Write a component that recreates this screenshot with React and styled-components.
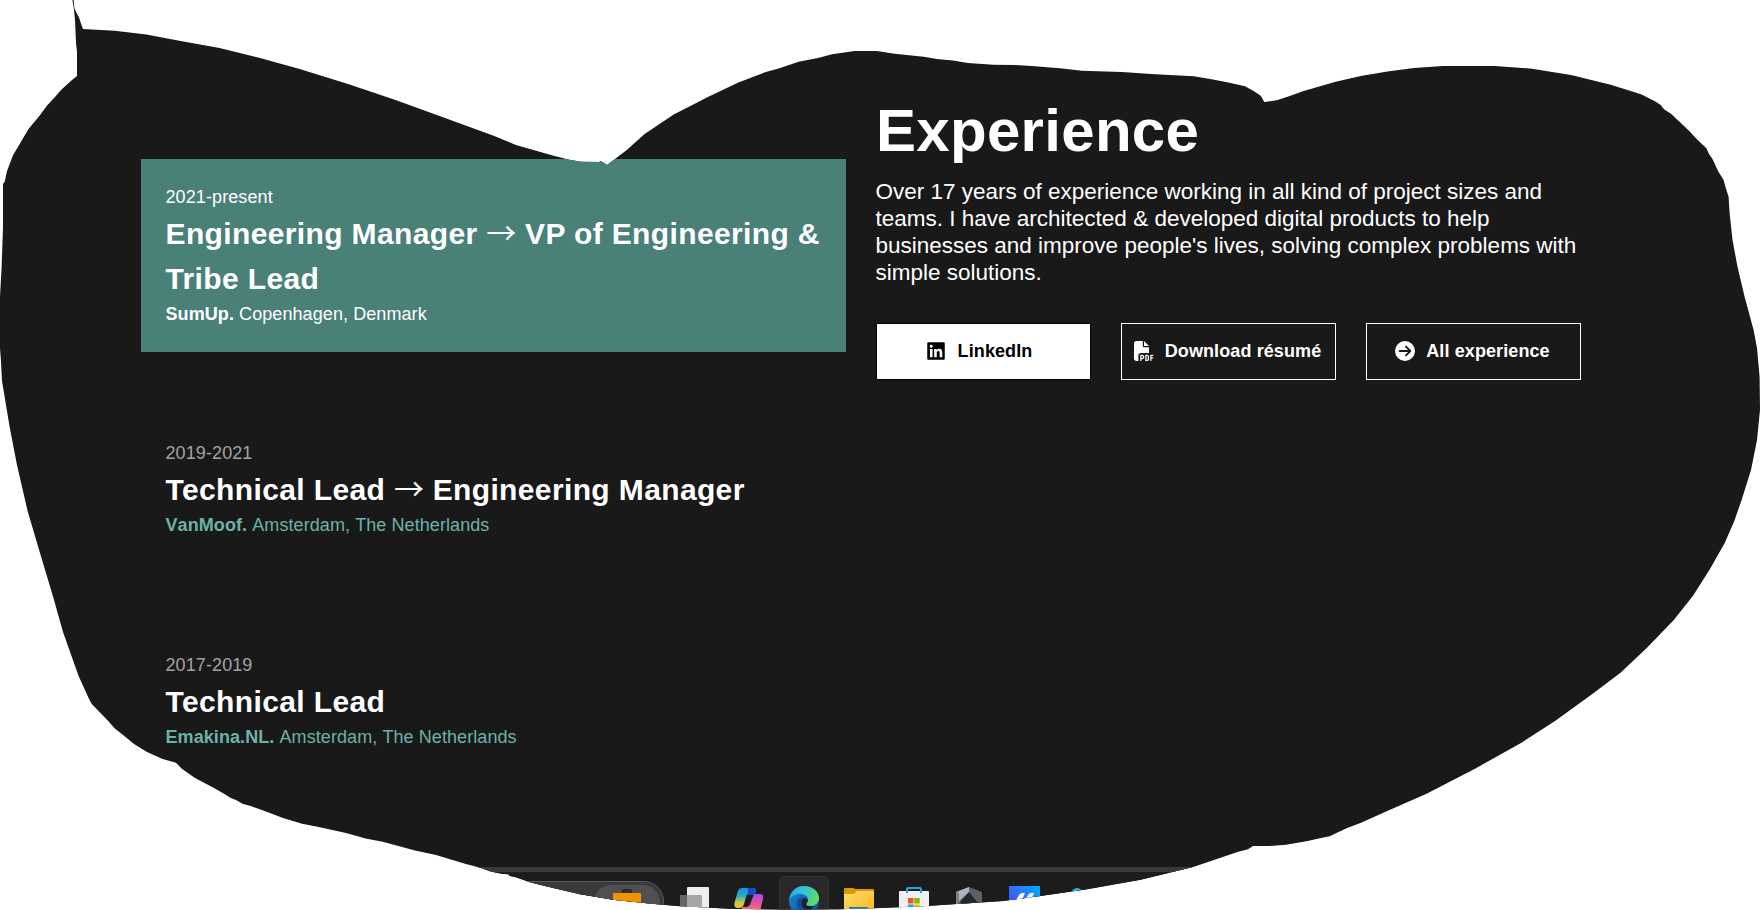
import React from "react";
import styled, { createGlobalStyle } from "styled-components";
import { FaLinkedin, FaFilePdf, FaCircleArrowRight } from "react-icons/fa6";

const GlobalStyle = createGlobalStyle`
  * { box-sizing: border-box; }
  body {
    margin: 0;
    background: #fff;
    font-family: "Liberation Sans", Arial, sans-serif;
    overflow: hidden;
  }
`;

const OUTLINE = `
72.4,0 73.6,0 74.4,8 76.3,12.5 79,17.5 81,23.5 83,29 114.7,30.8 146.3,34.5 182,41.3 219.5,48 261,58.3
300.5,69.3 348,84 395.5,100 443,117.3 494.3,136 516,145 553.6,155.7 569.4,159.8 581,161.7 599,162 601,161
604,163 607,165 626.8,150 644.6,134 673.7,114.5 709.4,96.3 738.4,82.5 765,72.3 778.6,68.6 798.7,61.8
819,57.7 832,54.3 854.5,51 876.8,51 894.6,53.7 923.7,56.7 937,59 952.7,60.5 968,63 993,64.7 1015,65
1035,66.3 1060,68.3 1082,70.7 1122,72 1151,74 1193.7,76.3 1211.6,79.3 1229.5,82.7 1245,86.3 1254,91.3
1260.7,95.7 1264.3,102 1276.8,100.3 1289,96.3 1303.6,91 1335.7,81.7 1360.7,76 1389,71.3 1414,68 1443,66
1494.6,66 1532,68.7 1571,75 1610.7,84.7 1641,94.3 1655,101.3 1660.7,105 1664,109.3 1671,113.7 1689,130.7
1696.4,138.7 1706.4,148.3 1709,154 1712.5,159 1718,171 1723.6,180 1726,188.7 1728.6,196.7 1729.6,213
1732.5,240 1737.5,266.7 1744.6,296.7 1753.6,330 1757,348 1759.6,376.7 1760,410 1757,440 1751,470
1741.6,500 1734,521.7 1724.7,543 1710,569 1693,595.7 1673.8,620 1647,647.7 1620.5,672.7 1591,695
1555,721 1521,743 1475,768.7 1426.6,793.7 1387.8,810.7 1361,822.7 1346.6,828.3 1329.6,836.3 1317.5,838.7
1307.8,841 1286,844.7 1269,846 1253,846 1248,849.3 1237.5,852 1194,866.7 1140.6,879.7 1087,889.3
1038.8,896.3 1003,901 953,904.3 926.7,906 880,908 840,909.3 780,909.6 730,908.7 676.7,906 646.7,903.3
613,899.7 580,894.3 548,886.7 530,882.3 516,877.3 510,876 508,874.3 501.7,873.7 491.7,871.7 480.3,867.7
465,863.8 436,855 415,850.5 382.7,841.7 365.5,838.6 346,833 317.6,826.7 302,823.8 283,818 264,810.8
250.7,806 243,804 236,800 230.8,798 224,793.7 214,788 195,778 181.8,768.8 176,762.8 162.6,759 147,752
134,744 122.5,734.4 114.8,728.4 108,720.7 97.6,710 91.8,704 88.8,698.6 78.5,675.8 63,632 53.6,598.6
40,553 27.6,511 17,465 9.6,426.7 2,381 0.9,360 0,348 0,297 1.6,267 3,227 3,184 4.7,181.7 7,171 13,155.3
28.5,129 39.5,115.7 47.5,105 55,97 61,90 72,80 77,76 77,52 76,43 75,20 74,9.5`
  .trim()
  .split(/\s+/)
  .map((p) => p.split(",").map((n) => n + "px").join(" "))
  .join(", ");

const Page = styled.div`
  width: 1760px;
  height: 910px;
  display: flex;
  flex-direction: column;
  background: #191919;
  color: #fff;
  clip-path: polygon(${OUTLINE});
`;

const Main = styled.main`
  height: 867px;
  display: grid;
  grid-template-columns: 705px 705px;
  column-gap: 30px;
  padding-left: 141px;
  align-items: start;
`;

const Timeline = styled.section`
  display: flex;
  flex-direction: column;
  gap: 63.25px;
  padding-top: 159px;
`;

const Job = styled.article`
  padding: 25px 0 24px 24.5px;
  background: ${(p) => (p.$active ? "#498078" : "transparent")};
  color: ${(p) => (p.$active ? "#fff" : "#6cb2a9")};
`;

const Period = styled.p`
  margin: 0;
  font-size: 18px;
  line-height: 27px;
  letter-spacing: 0.1px;
  color: ${(p) => (p.$active ? "#fff" : "#a3a3a3")};
`;

const Role = styled.h3`
  margin: 0;
  font-size: 30px;
  line-height: 45px;
  font-weight: 700;
  letter-spacing: 0.37px;
  color: #fff;
  white-space: pre-line;
`;

const Arrow = styled.span`
  font-family: "Noto Sans CJK SC", sans-serif;
  font-weight: 400;
  letter-spacing: 0;
  line-height: 1;
`;

const Place = styled.p`
  margin: 0;
  font-size: 18px;
  line-height: 27px;
  letter-spacing: 0.08px;
  font-kerning: none;
`;

const Intro = styled.section`
  padding-top: 96px;
`;

const Title = styled.h1`
  margin: 0;
  font-size: 60px;
  line-height: 69px;
  font-weight: 700;
  letter-spacing: 0.3px;
`;

const Summary = styled.p`
  margin: 13px 0 37px -0.5px;
  font-size: 22.5px;
  line-height: 27px;
  white-space: pre;
`;

const Actions = styled.div`
  display: grid;
  grid-template-columns: repeat(3, 215px);
  gap: 30px;
`;

const Button = styled.a`
  height: 57px;
  display: flex;
  align-items: center;
  justify-content: center;
  gap: ${(p) => (p.$primary ? 12 : 11)}px;
  padding-right: ${(p) => (p.$primary ? 9 : 2)}px;
  border: 1px solid ${(p) => (p.$primary ? "#000" : "#fff")};
  background: ${(p) => (p.$primary ? "#fff" : "transparent")};
  color: ${(p) => (p.$primary ? "#000" : "#fff")};
  font-size: 18px;
  font-weight: 700;
  letter-spacing: 0.1px;
  white-space: nowrap;
  svg { width: 20px; height: 20px; flex: none; margin-bottom: 2px; }
`;

const Taskbar = styled.footer`
  height: 43px;
  display: flex;
  align-items: flex-start;
  gap: 5px;
  padding: 4px 0 0 400px;
  background: #1c1c1c;
  border-top: 5px solid #3a3a3a;
`;

const Search = styled.div`
  width: 264px;
  height: 40px;
  margin-top: 5px;
  display: flex;
  justify-content: flex-end;
  padding: 3px 3px 0 0;
  border: 1px solid #5a5a5a;
  border-radius: 20px;
  background: #3a3a3a;
`;

const SearchBadge = styled.div`
  width: 66px;
  height: 34px;
  display: flex;
  justify-content: center;
  padding-top: 4px;
  border-radius: 17px;
  background: #505050;
`;

const Slot = styled.div`
  width: 50px;
  height: 46px;
  display: flex;
  justify-content: center;
  padding-top: 9px;
  border-radius: 5px;
  border: 1px solid ${(p) => (p.$active ? "#343434" : "transparent")};
  background: ${(p) => (p.$active ? "#292929" : "transparent")};
  svg { flex: none; overflow: visible; }
`;

const Briefcase = () => (
  <svg width="28" height="26" viewBox="0 0 28 26">
    <path d="M10 4V2q0-1 1-1h6q1 0 1 1v2" fill="#333" stroke="#282828" strokeWidth="2" />
    <rect y="4" width="28" height="20" rx="1" fill="#f39200" />
  </svg>
);

const TaskView = () => (
  <svg width="30" height="32" viewBox="0 0 30 32">
    <rect x="8" y="1" width="22" height="24" rx="1" fill="#eee" />
    <rect x="1" y="9" width="22" height="22" rx="1" fill="#999" opacity=".85" />
    <rect x="1" y="9" width="7" height="22" fill="#666" />
  </svg>
);

const Copilot = () => (
  <svg width="30" height="30" viewBox="0 0 30 30">
    <defs>
      <linearGradient id="cpA" x1="0" y1="0" x2="0" y2="1">
        <stop offset="0" stopColor="#168be2" />
        <stop offset=".4" stopColor="#25b1c6" />
        <stop offset=".75" stopColor="#dac83a" />
      </linearGradient>
      <linearGradient id="cpB" x1="0" y1="0" x2="0" y2="1">
        <stop offset="0" stopColor="#a44be8" />
        <stop offset=".5" stopColor="#ef5492" />
        <stop offset="1" stopColor="#ff8c4a" />
      </linearGradient>
    </defs>
    <path d="M7 2h12q3 0 3 5h-6q-3 0-4 4l-2 7q-1 4-5 4H3q-4-1-2-7L4 5q1-3 3-3z" fill="url(#cpA)" />
    <path d="M14 2h4q3 0 4 5l-1 2h-7z" fill="#164bc4" />
    <path d="M20 8h6q4 0 3 5l-3 12q-1 4-5 4H9q-2-1-1-8h5q3-1 4-5z" fill="url(#cpB)" />
  </svg>
);

const Edge = () => (
  <svg width="30" height="30" viewBox="0 0 30 30">
    <defs>
      <linearGradient id="edA" x1="0" y1=".3" x2="1" y2=".5">
        <stop offset="0" stopColor="#26aee8" />
        <stop offset=".5" stopColor="#33c3d2" />
        <stop offset="1" stopColor="#65df59" />
      </linearGradient>
      <linearGradient id="edB" x1="0" y1="0" x2="1" y2="1">
        <stop offset="0" stopColor="#1687d8" />
        <stop offset="1" stopColor="#0c4f9f" />
      </linearGradient>
    </defs>
    <circle cx="15" cy="15" r="15" fill="url(#edB)" />
    <path d="M0 14C1 6 7 0 15 0c9 0 15 6 15 12 0 5-4 8-8 8-3 0-5-1-5-2s2-2 2-5c0-3-4-5-8-5C6 8 1 11 0 14z" fill="url(#edA)" />
    <path d="M17 12q-5 0-5 5 0 4 4 7h6l3-4q-8 1-8-2 2-2 2-4z" fill="#222" />
    <path d="M8 20q-1-9 7-9-4 4-2 9 2 4 8 8-10 2-13-8z" fill="#104f98" />
  </svg>
);

const Folder = () => (
  <svg width="30" height="28" viewBox="0 0 30 28">
    <defs>
      <linearGradient id="fo" x1="0" y1="0" x2="1" y2="1">
        <stop offset="0" stopColor="#ffdc6e" />
        <stop offset="1" stopColor="#f9b91c" />
      </linearGradient>
    </defs>
    <path d="M0 10V3q0-1 1-1h8q1 0 2 1l2 0h16q1 0 1 1v5z" fill="#dc9800" />
    <path d="M0 8h9q2 0 3-2l1-1h17v20H0z" fill="url(#fo)" />
    <path d="M5 22q0-1 1-1h17q1 0 1 1v4H5z" fill="#1678be" />
  </svg>
);

const Store = () => (
  <svg width="30" height="30" viewBox="0 0 30 30">
    <path d="M8 8V3q0-1 1-1h12q1 0 1 1v5" fill="none" stroke="#20a4df" strokeWidth="2" />
    <path d="M0 6q0-1 1-1h28q1 0 1 1v20H0z" fill="#f0f0f0" />
    <path d="M8 5v2m14-2v2" stroke="#20a4df" strokeWidth="2" />
    <path fill="#f25022" d="M9 12h5.500v5.500H9z" />
    <path fill="#7fba00" d="M15.200 12h5.500v5.500h-5.500z" />
    <path fill="#00a4ef" d="M9 18.500h5.500V24H9z" />
    <path fill="#ffb900" d="M15.200 18.500h5.500V24h-5.500z" />
  </svg>
);

const Prism = () => (
  <svg width="26" height="28" viewBox="0 0 26 28">
    <path d="M13 1l13 5v14l-13 8L0 20V6z" fill="#59616a" />
    <path d="M13 1L0 6v12L13 6z" fill="#aab2ba" />
    <path d="M13 6l10 12-10 6L4 16z" fill="#24272b" />
    <path d="M0 6l3 1v10l-3 3z" fill="#78818a" />
  </svg>
);

const Slashes = () => (
  <svg width="31" height="30" viewBox="0 0 31 30">
    <defs>
      <linearGradient id="sl" x1="0" y1="1" x2="1" y2="0">
        <stop offset="0" stopColor="#5433ff" />
        <stop offset=".55" stopColor="#2a73ff" />
        <stop offset="1" stopColor="#00b0ff" />
      </linearGradient>
    </defs>
    <rect width="31" height="30" fill="url(#sl)" />
    <path d="M13 7h3l-4 9H7q2-8 6-9zM22 7h3l-4 9h-5q2-8 6-9z" fill="#fff" />
  </svg>
);

const Drop = () => (
  <svg width="30" height="30" viewBox="0 0 30 30">
    <path d="M4 8l6-5q3-2 6 0l6 5v14H4z" fill="#27b3ee" />
  </svg>
);

const JOBS = [
  {
    period: "2021-present",
    from: "Engineering Manager",
    to: "VP of Engineering &\nTribe Lead",
    company: "SumUp.",
    city: "Copenhagen, Denmark",
    active: true,
  },
  {
    period: "2019-2021",
    from: "Technical Lead",
    to: "Engineering Manager",
    company: "VanMoof.",
    city: "Amsterdam, The Netherlands",
  },
  {
    period: "2017-2019",
    from: "Technical Lead",
    company: "Emakina.NL.",
    city: "Amsterdam, The Netherlands",
  },
];

const SUMMARY = [
  "Over 17 years of experience working in all kind of project sizes and",
  "teams. I have architected & developed digital products to help",
  "businesses and improve people's lives, solving complex problems with",
  "simple solutions.",
].join("\n");

export default function App() {
  return (
    <>
      <GlobalStyle />
      <Page>
        <Main>
          <Timeline>
            {JOBS.map((job) => (
              <Job key={job.period} $active={job.active}>
                <Period $active={job.active}>{job.period}</Period>
                <Role>
                  {job.from}
                  {job.to && <> <Arrow>→</Arrow> {job.to}</>}
                </Role>
                <Place>
                  <strong>{job.company}</strong> {job.city}
                </Place>
              </Job>
            ))}
          </Timeline>
          <Intro>
            <Title>Experience</Title>
            <Summary>{SUMMARY}</Summary>
            <Actions>
              <Button $primary><FaLinkedin />LinkedIn</Button>
              <Button><FaFilePdf />Download résumé</Button>
              <Button><FaCircleArrowRight />All experience</Button>
            </Actions>
          </Intro>
        </Main>
        <Taskbar>
          <Search><SearchBadge><Briefcase /></SearchBadge></Search>
          <Slot><TaskView /></Slot>
          <Slot><Copilot /></Slot>
          <Slot $active><Edge /></Slot>
          <Slot><Folder /></Slot>
          <Slot><Store /></Slot>
          <Slot><Prism /></Slot>
          <Slot><Slashes /></Slot>
          <Slot><Drop /></Slot>
        </Taskbar>
      </Page>
    </>
  );
}
